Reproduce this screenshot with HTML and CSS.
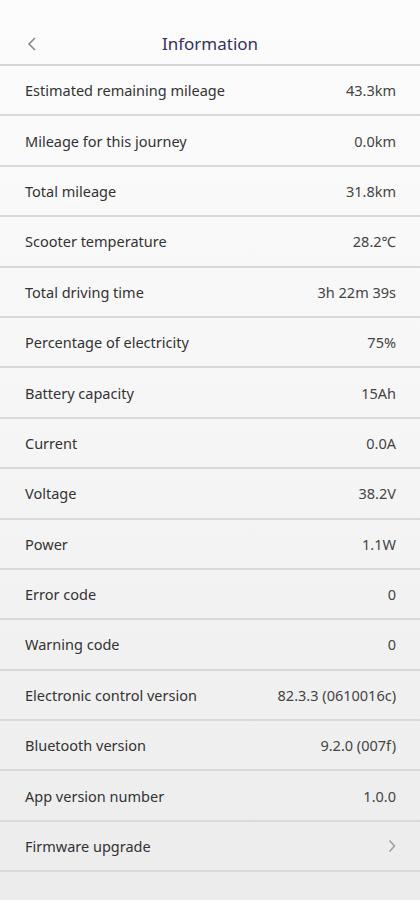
FILE: index.html
```html
<!DOCTYPE html>
<html>
<head>
  <meta charset="UTF-8">
  <title>Information</title>
  <link rel="stylesheet" href="styles.css">
</head>
<body>
<div class="page">
  <div class="header">
    <span class="back">
      <svg width="10" height="16" viewBox="0 0 10 16"><path d="M8 2 L2 8 L8 14" fill="none" stroke="#888" stroke-width="1.6"/></svg>
    </span>
    <span class="title">Information</span>
  </div>

  <div class="list">
    <div class="row"><span>Estimated remaining mileage</span><span class="val">43.3km</span></div>
    <div class="row"><span>Mileage for this journey</span><span class="val">0.0km</span></div>
    <div class="row"><span>Total mileage</span><span class="val">31.8km</span></div>
    <div class="row"><span>Scooter temperature</span><span class="val">28.2℃</span></div>
    <div class="row"><span>Total driving time</span><span class="val">3h 22m 39s</span></div>
    <div class="row"><span>Percentage of electricity</span><span class="val">75%</span></div>
    <div class="row"><span>Battery capacity</span><span class="val">15Ah</span></div>
    <div class="row"><span>Current</span><span class="val">0.0A</span></div>
    <div class="row"><span>Voltage</span><span class="val">38.2V</span></div>
    <div class="row"><span>Power</span><span class="val">1.1W</span></div>
    <div class="row"><span>Error code</span><span class="val">0</span></div>
    <div class="row"><span>Warning code</span><span class="val">0</span></div>
    <div class="row"><span>Electronic control version</span><span class="val">82.3.3 (0610016c)</span></div>
    <div class="row"><span>Bluetooth version</span><span class="val">9.2.0 (007f)</span></div>
    <div class="row"><span>App version number</span><span class="val">1.0.0</span></div>
    <div class="row"><span>Firmware upgrade</span>
      <span class="val">
        <svg width="8" height="14" viewBox="0 0 8 14"><path d="M1.5 1.5 L6.5 7 L1.5 12.5" fill="none" stroke="#999" stroke-width="1.4"/></svg>
      </span>
    </div>
  </div>
</div>
</body>
</html>
```

FILE: styles.css
```css
body {
  margin: 0;
  font-family: "Noto Sans", "Open Sans", sans-serif;
  background: #ececec;
  color: #333;
}
.page {
  min-height: 900px;
  background: linear-gradient(#fcfcfc, #f7f7f7 40%, #ececec);
}
.header {
  height: 64px;
  display: flex;
  align-items: center;
  justify-content: center;
  padding-top: 24px;
  box-sizing: content-box;
  height: 40px;
  position: relative;
  border-bottom: 2px solid #d6d6d6;
}
.back {
  position: absolute;
  left: 27px;
  top: 36px;
  line-height: 0;
}
.title {
  font-size: 17px;
  color: #35315f;
  line-height: 24px;
}
.row {
  height: 48.4px;
  display: flex;
  align-items: center;
  justify-content: space-between;
  padding: 0 24px 0 25px;
  border-bottom: 2px solid #d9d9d9;
  font-size: 14.5px;
}
.val {
  color: #444;
  display: flex;
  align-items: center;
}
```
